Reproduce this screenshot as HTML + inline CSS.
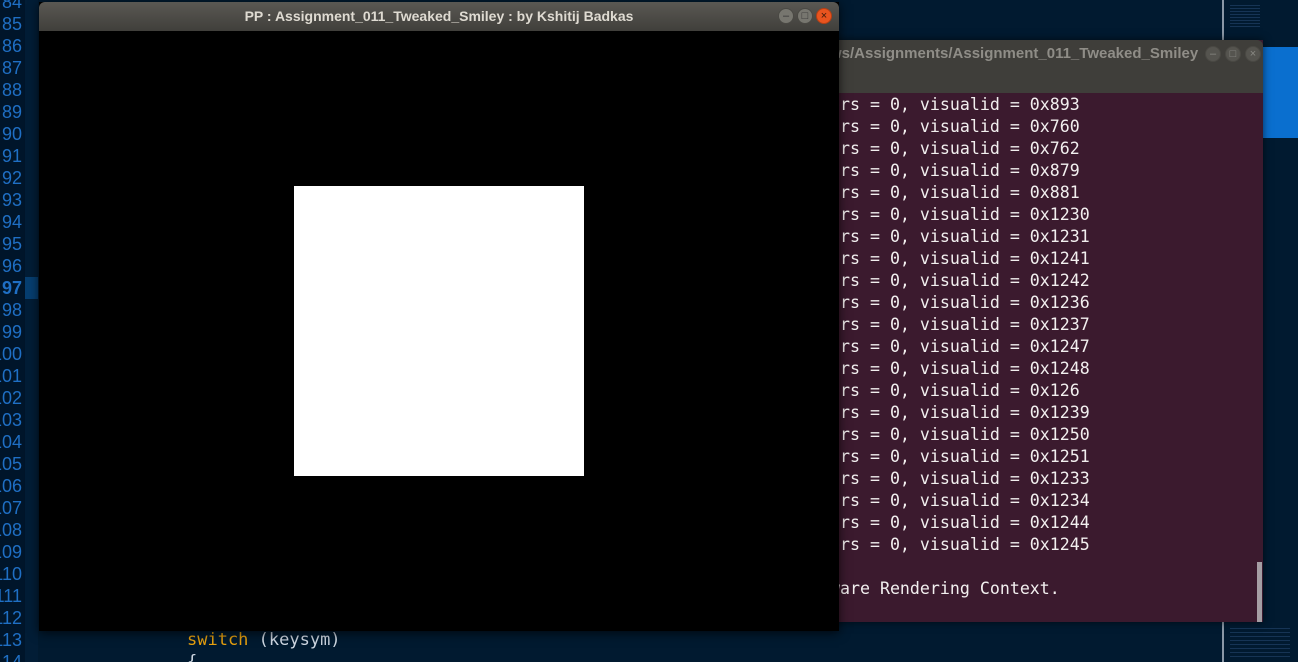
<!DOCTYPE html>
<html><head><meta charset="utf-8"><style>
*{margin:0;padding:0;box-sizing:border-box}
html,body{width:1298px;height:662px;overflow:hidden}
body{background:#011a30;position:relative;font-family:"Liberation Sans",sans-serif}
.gut{position:absolute;left:0;top:0;width:25px;height:662px;background:#00152a}
.gut2{position:absolute;left:25px;top:0;width:13px;height:662px;background:#021d36}
.ln{position:absolute;left:-8px;width:30px;text-align:right;color:#1f6fc4;font-size:18px;line-height:22px;font-family:"Liberation Sans",sans-serif}
.abs{position:absolute}
.code{font-family:"DejaVu Sans Mono",monospace;font-size:17px;line-height:22px;color:#cfd8e3}
.term{position:absolute;left:830px;top:40px;width:433px;height:582px;background:#3b1a2e;box-shadow:0 0 8px rgba(0,0,0,.6)}
.tbar{position:absolute;left:0;top:0;width:433px;height:53px;background:#3f3e3a;border-radius:6px 6px 0 0}
.tl{position:absolute;left:0;white-space:pre;font-family:"DejaVu Sans Mono",monospace;font-size:16.6px;line-height:22px;color:#f2efef}
.win{position:absolute;left:39px;top:2px;width:800px;height:629px;background:#000;box-shadow:0 2px 10px rgba(0,0,0,.7)}
.wbar{position:absolute;left:0;top:0;width:800px;height:29px;background:linear-gradient(#5a5853,#403f3b);border-radius:6px 6px 0 0;color:#dfdbd2;font-weight:bold;font-size:14px;text-align:center;line-height:29px}
.btn{position:absolute;width:16px;height:16px;border-radius:50%;background:#77766f;border:1px solid #4a4944;color:#333;font-size:11px;line-height:14px;text-align:center}
#lns{position:absolute;left:-8px;top:-9px;width:30px;text-align:right;color:#1f6fc4;font-size:18px;line-height:22px;white-space:pre}
</style></head><body>
<div class="gut"></div><div class="gut2"></div>
<div class="abs" style="left:25px;top:277px;width:13px;height:22px;background:#063e70"></div>
<div id="lns">84
85
86
87
88
89
90
91
92
93
94
95
96
<b>97</b>
98
99
100
101
102
103
104
105
106
107
108
109
110
111
112
113
114</div>
<div class="abs code" style="left:187px;top:629px"><span style="color:#e8a10f">switch</span> (keysym)</div>
<div class="abs code" style="left:187px;top:651px">{</div>
<div class="abs" style="left:1222px;top:0;width:2px;height:662px;background:#8a97a6"></div>
<div class="abs" style="left:1263px;top:47px;width:35px;height:91px;background:#0a6fcf"></div>
<div class="abs" style="left:1230px;top:5px;width:30px;height:24px;background:repeating-linear-gradient(#2a4f7a 0 1px,transparent 1px 3px);opacity:.5"></div>
<div class="abs" style="left:1230px;top:628px;width:60px;height:30px;background:repeating-linear-gradient(#2a4f7a 0 1px,transparent 1px 4px);opacity:.5"></div>
<div class="term">
<div class="tbar">
<div class="abs" style="left:0;top:5px;white-space:pre;color:#8f8d87;font-weight:bold;font-size:15px">ws/Assignments/Assignment_011_Tweaked_Smiley</div>
<div class="btn" style="left:375px;top:6px;background:#55544f;color:#8a8a84;border-color:#4a4944">–</div>
<div class="btn" style="left:395px;top:6px;background:#55544f;color:#8a8a84;border-color:#4a4944">□</div>
<div class="btn" style="left:415px;top:6px;background:#55544f;color:#8a8a84;border-color:#4a4944">×</div>
</div>
<div class="tl" style="top:54px">ers = 0, visualid = 0x893
ers = 0, visualid = 0x760
ers = 0, visualid = 0x762
ers = 0, visualid = 0x879
ers = 0, visualid = 0x881
ers = 0, visualid = 0x1230
ers = 0, visualid = 0x1231
ers = 0, visualid = 0x1241
ers = 0, visualid = 0x1242
ers = 0, visualid = 0x1236
ers = 0, visualid = 0x1237
ers = 0, visualid = 0x1247
ers = 0, visualid = 0x1248
ers = 0, visualid = 0x126
ers = 0, visualid = 0x1239
ers = 0, visualid = 0x1250
ers = 0, visualid = 0x1251
ers = 0, visualid = 0x1233
ers = 0, visualid = 0x1234
ers = 0, visualid = 0x1244
ers = 0, visualid = 0x1245

ware Rendering Context.</div>
<div class="abs" style="left:427px;top:522px;width:5px;height:60px;background:#a59ea4"></div>
</div>
<div class="win">
<div class="wbar">PP : Assignment_011_Tweaked_Smiley : by Kshitij Badkas</div>
<div class="btn" style="left:739px;top:6px">–</div>
<div class="btn" style="left:758px;top:6px">□</div>
<div class="btn" style="left:777px;top:6px;background:#e9541f;border-color:#b53f14;color:#3a1a0a">×</div>
<div class="abs" style="left:255px;top:184px;width:290px;height:290px;background:#fff"></div>
</div>
</body></html>
